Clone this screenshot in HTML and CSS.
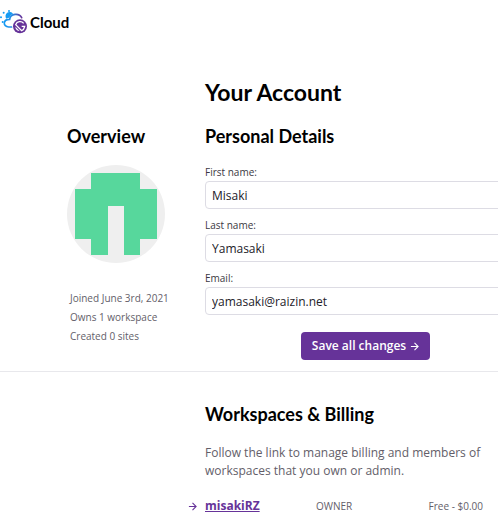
FILE: index.html
```html
<!DOCTYPE html>
<html lang="en">
<head>
<meta charset="utf-8">
<title>Your Account</title>
<link rel="stylesheet" href="styles.css">
</head>
<body>
<header class="topbar">
  <a class="brand" href="#">
    <svg class="brand-logo" viewBox="0 0 84 72" aria-hidden="true">
      <defs>
        <linearGradient id="cloud" x1="0" x2="1" y1="0" y2="0">
          <stop offset="0" stop-color="#159bf3"/>
          <stop offset=".5" stop-color="#2d86df"/>
          <stop offset="1" stop-color="#663399"/>
        </linearGradient>
      </defs>
      <g fill="#159bf3">
        <circle cx="27" cy="3" r="3"/>
        <circle cx="11" cy="8" r="3"/>
        <circle cx="3" cy="22" r="3"/>
        <circle cx="8" cy="36" r="3"/>
        <path d="M19 26a12 12 0 1 1 20-15c-5 2-9 6-11 12-3 0-6 1-9 3z"/>
      </g>
      <path d="M36 51H26c-18-1-18-23 3-23 2-18 29-20 36-5" fill="none" stroke="url(#cloud)" stroke-width="5" stroke-linecap="round"/>
      <circle cx="60" cy="49" r="23" fill="#fff"/>
      <circle cx="60" cy="49" r="21" fill="#663399"/>
      <path d="M46 50l13 13C51 63 46 57 46 50z" fill="#fff"/>
      <path d="M71 40A14 14 0 0 0 47 44l18 18c5-2 8-7 9-13H65" fill="none" stroke="#fff" stroke-width="4"/>
    </svg>
    <span>Cloud</span>
  </a>
</header>
<main>
  <section class="account">
    <h1>Your Account</h1>
    <aside class="overview">
      <h2>Overview</h2>
      <svg class="avatar" viewBox="0 0 98 98" role="img" aria-label="Avatar">
        <circle cx="49" cy="49" r="49" fill="#efefef"/>
        <path d="M24 8h49v16h17v50H73v16H57V41H41v49H24V74H8V24h16z" fill="#57d79c"/>
      </svg>
      <ul class="facts">
        <li>Joined June 3rd, 2021</li>
        <li>Owns 1 workspace</li>
        <li>Created 0 sites</li>
      </ul>
    </aside>
    <form class="details">
      <h2>Personal Details</h2>
      <label for="first">First name:</label>
      <input id="first" type="text" value="Misaki">
      <label for="last">Last name:</label>
      <input id="last" type="text" value="Yamasaki">
      <label for="email">Email:</label>
      <input id="email" type="email" value="yamasaki@raizin.net">
      <button type="button">Save all changes
        <svg class="arrow" viewBox="0 0 10 10" aria-hidden="true"><path d="M1 5h8M5 1l4 4-4 4"/></svg>
      </button>
    </form>
  </section>
  <section class="billing">
    <h2>Workspaces &amp; Billing</h2>
    <p>Follow the link to manage billing and members of workspaces that you own or admin.</p>
    <div class="workspace">
      <svg class="arrow" viewBox="0 0 10 10" aria-hidden="true"><path d="M1 5h8M5 1l4 4-4 4"/></svg>
      <a href="#">misakiRZ</a>
      <span>OWNER</span>
      <span>Free - $0.00</span>
    </div>
  </section>
</main>
</body>
</html>
```
FILE: styles.css
```css
* {
  box-sizing: border-box;
}

body {
  margin: 0;
  background: #fff;
  color: #635e69;
  font: 12px/18px "Open Sans", "Noto Sans", sans-serif;
}

main {
  overflow: hidden;
}

h1, h2, .brand {
  margin: 0;
  color: #000;
  font-family: Lato, sans-serif;
  font-weight: 700;
}

h1 {
  font-size: 23px;
  line-height: 28px;
}

h2 {
  font-size: 18px;
  line-height: 24px;
}

.topbar {
  padding: 10px 0;
}

.brand {
  display: flex;
  align-items: center;
  gap: 2px;
  font-size: 15px;
  line-height: 24px;
  text-decoration: none;
}

.brand-logo {
  width: 28px;
  height: 24px;
}

.account {
  display: grid;
  grid-template-columns: 98px 1fr;
  column-gap: 40px;
  row-gap: 18px;
  padding: 34px 0 11px 67px;
  border-bottom: 1px solid #e8e8ec;
}

h1 {
  grid-column: 2;
}

.avatar {
  display: block;
  width: 98px;
  height: 98px;
  margin-top: 17px;
}

.facts {
  margin: 26px 0 0;
  padding: 0 0 0 3px;
  list-style: none;
  font-size: 10px;
  line-height: 19px;
  white-space: nowrap;
}

.details {
  display: flex;
  flex-direction: column;
  margin-right: -28px;
}

.details h2 {
  margin-bottom: 16px;
}

label {
  color: #3b3842;
  font-size: 10px;
  line-height: 16px;
}

input {
  width: 100%;
  height: 28px;
  margin: 1px 0 8px;
  padding: 0 6px;
  border: 1px solid #dddce4;
  border-radius: 4px;
  background: #fff;
  color: #232129;
  font: inherit;
}

button {
  display: flex;
  align-items: center;
  align-self: center;
  gap: 4px;
  height: 28px;
  margin-top: 9px;
  padding: 0 11px;
  border: 0;
  border-radius: 4px;
  background: #663399;
  color: #fff;
  font: inherit;
  font-weight: 600;
}

.arrow {
  width: 9px;
  height: 9px;
  fill: none;
  stroke: currentColor;
  stroke-width: 1.2;
}

.billing {
  padding: 30px 15px 0 188px;
}

.billing h2, .billing p {
  margin-left: 17px;
}

.billing p {
  margin-top: 18px;
  margin-bottom: 17px;
}

.workspace {
  display: grid;
  grid-template-columns: 9px 103px 1fr auto;
  column-gap: 8px;
  align-items: center;
  font-size: 10px;
}

.workspace .arrow, .workspace a {
  color: #663399;
}

.workspace a {
  font-size: 12px;
  font-weight: 700;
}
```
